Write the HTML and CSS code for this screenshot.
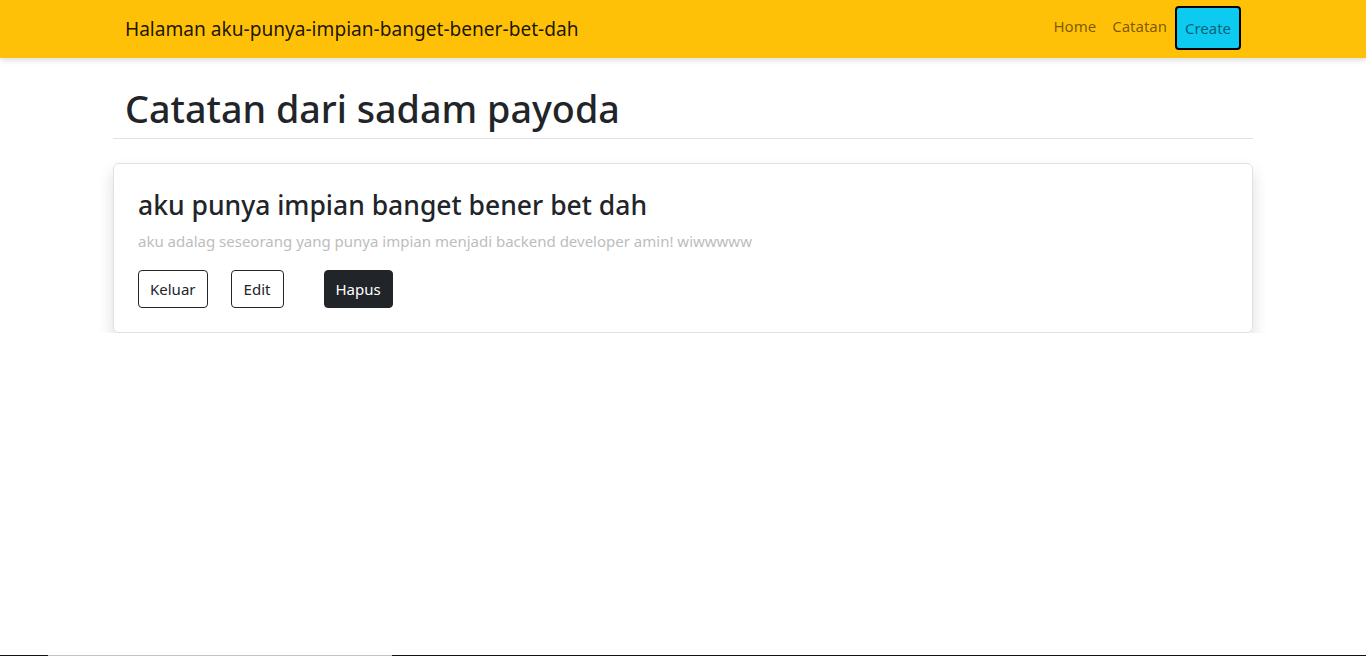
FILE: index.html
```html
<!DOCTYPE html>
<html lang="id">
<head>
<meta charset="utf-8">
<title>Catatan</title>
<link rel="stylesheet" href="styles.css">
</head>
<body>
<nav class="navbar">
  <div class="nav-inner">
    <a class="brand" href="#">Halaman aku-punya-impian-banget-bener-bet-dah</a>
    <div class="nav-links">
      <a class="nav-link" href="#">Home</a>
      <a class="nav-link" href="#">Catatan</a>
      <a class="nav-btn" href="#">Create</a>
    </div>
  </div>
</nav>
<main class="container">
  <h1 class="page-title">Catatan dari sadam payoda</h1>
  <section class="card">
    <h3 class="card-title">aku punya impian banget bener bet dah</h3>
    <p class="card-text">aku adalag seseorang yang punya impian menjadi backend developer amin! wiwwwww</p>
    <div class="actions">
      <button class="btn btn-outline">Keluar</button>
      <button class="btn btn-outline btn-edit">Edit</button>
      <button class="btn btn-dark">Hapus</button>
    </div>
  </section>
</main>
<div class="bottom-line"></div>
</body>
</html>
```
FILE: styles.css
```css
* { box-sizing: border-box; }
html, body { margin: 0; padding: 0; }
body {
  font-family: "Noto Sans", "Open Sans", sans-serif;
  color: #212529;
  background: #fff;
  font-size: 16px;
  line-height: 1.5;
}
a { text-decoration: none; }
.navbar {
  background: #ffc107;
  height: 58px;
  box-shadow: 0 2px 6px rgba(0,0,0,.15);
}
.nav-inner {
  max-width: 1140px;
  margin: 0 auto;
  padding: 0 12px;
  height: 100%;
  display: flex;
  align-items: center;
  justify-content: space-between;
}
.brand {
  color: rgba(0,0,0,.9);
  font-size: 19.1px;
}
.nav-links {
  display: flex;
  align-items: center;
  height: 100%;
}
.nav-link {
  color: rgba(0,0,0,.55);
  font-size: 15px;
  padding: 0 8px;
  margin-top: -5px;
}
.nav-btn {
  color: rgba(0,0,0,.55);
  background: #0dcaf0;
  border: 2px solid #000;
  border-radius: 4px;
  font-size: 15px;
  height: 44px;
  width: 66px;
  display: flex;
  align-items: center;
  justify-content: center;
  margin-top: -2px;
}
.container {
  max-width: 1140px;
  margin: 0 auto;
}
.page-title {
  margin: 0;
  padding: 28px 12px 7px;
  font-size: 37.7px;
  font-weight: 500;
  line-height: 1.2;
  border-bottom: 1px solid #dee2e6;
}
.card {
  margin-top: 24px;
  border: 1px solid #dee2e6;
  border-radius: 6px;
  box-shadow: 0 8px 16px rgba(0,0,0,.14);
  padding: 26px 24px 24px;
}
.card-title {
  margin: 0 0 8px;
  font-size: 26.5px;
  font-weight: 500;
  line-height: 1.2;
}
.card-text {
  margin: 0 0 17px;
  color: #bdbdbd;
  font-size: 15px;
}
.actions {
  display: flex;
  align-items: center;
}
.btn {
  font-family: inherit;
  font-size: 15px;
  height: 38px;
  border-radius: 4px;
  padding: 0 11px;
  cursor: pointer;
}
.btn-outline {
  background: #fff;
  color: #212529;
  border: 1px solid #212529;
}
.btn-edit {
  margin-left: 23px;
  min-width: 53px;
}
.btn-dark {
  margin-left: 40px;
  background: #212529;
  color: #fff;
  border: 1px solid #212529;
}
.bottom-line {
  position: fixed;
  left: 0;
  right: 0;
  bottom: 0;
  height: 1px;
  background: linear-gradient(to right, #111 0, #111 48px, #c4c4c4 48px, #c4c4c4 392px, #111 392px);
}
```
